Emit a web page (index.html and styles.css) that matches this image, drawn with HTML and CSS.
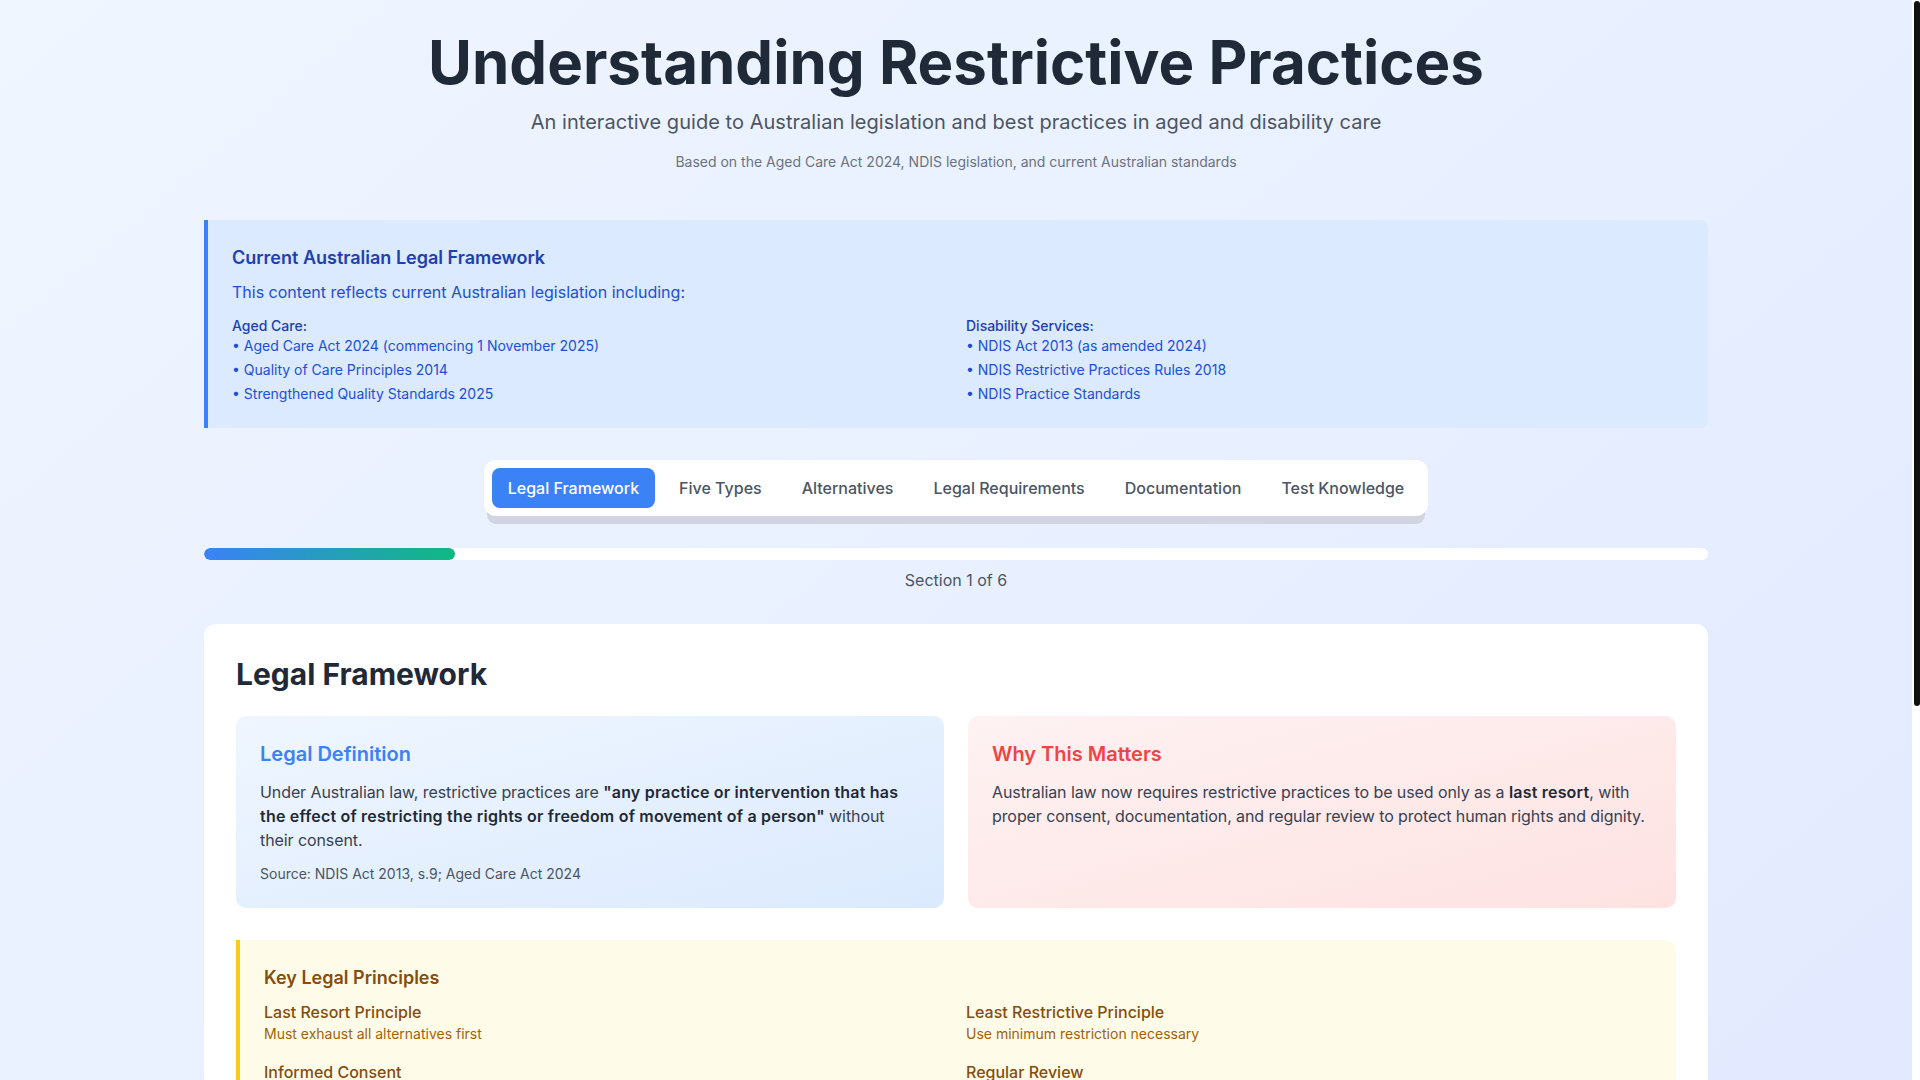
FILE: index.html
```html
<!DOCTYPE html>
<html lang="en">
<head>
<meta charset="utf-8">
<title>Understanding Restrictive Practices</title>
<link rel="stylesheet" href="styles.css">
</head>
<body>
<div class="scrollbar" aria-hidden="true"><div class="scrollbar-thumb"></div></div>
<div class="page">
  <header class="hero">
    <h1 class="hero-title">Understanding Restrictive Practices</h1>
    <p class="hero-sub">An interactive guide to Australian legislation and best practices in aged and disability care</p>
    <p class="hero-note">Based on the Aged Care Act 2024, NDIS legislation, and current Australian standards</p>
  </header>

  <section class="framework">
    <h3 class="framework-title">Current Australian Legal Framework</h3>
    <p class="framework-intro">This content reflects current Australian legislation including:</p>
    <div class="framework-grid">
      <div>
        <p class="framework-label">Aged Care:</p>
        <ul class="framework-list">
          <li>• Aged Care Act 2024 (commencing 1 November 2025)</li>
          <li>• Quality of Care Principles 2014</li>
          <li>• Strengthened Quality Standards 2025</li>
        </ul>
      </div>
      <div>
        <p class="framework-label">Disability Services:</p>
        <ul class="framework-list">
          <li>• NDIS Act 2013 (as amended 2024)</li>
          <li>• NDIS Restrictive Practices Rules 2018</li>
          <li>• NDIS Practice Standards</li>
        </ul>
      </div>
    </div>
  </section>

  <div class="tabs-wrap">
    <nav class="tabs">
      <button class="tab tab-active">Legal Framework</button>
      <button class="tab">Five Types</button>
      <button class="tab">Alternatives</button>
      <button class="tab">Legal Requirements</button>
      <button class="tab">Documentation</button>
      <button class="tab">Test Knowledge</button>
    </nav>
  </div>

  <div class="progress">
    <div class="progress-track"><div class="progress-fill" style="width: 16.6667%"></div></div>
    <p class="progress-label">Section 1 of 6</p>
  </div>

  <main class="card">
    <h2 class="card-title">Legal Framework</h2>
    <div class="two-col">
      <div class="panel panel-blue">
        <h3 class="panel-title title-blue">Legal Definition</h3>
        <p class="panel-text">Under Australian law, restrictive practices are <strong>"any practice or intervention that has the effect of restricting the rights or freedom of movement of a person"</strong> without their consent.</p>
        <p class="panel-source">Source: NDIS Act 2013, s.9; Aged Care Act 2024</p>
      </div>
      <div class="panel panel-red">
        <h3 class="panel-title title-red">Why This Matters</h3>
        <p class="panel-text">Australian law now requires restrictive practices to be used only as a <strong>last resort</strong>, with proper consent, documentation, and regular review to protect human rights and dignity.</p>
      </div>
    </div>

    <section class="principles">
      <h3 class="principles-title">Key Legal Principles</h3>
      <div class="principles-grid">
        <div>
          <p class="principle-name">Last Resort Principle</p>
          <p class="principle-desc">Must exhaust all alternatives first</p>
        </div>
        <div>
          <p class="principle-name">Least Restrictive Principle</p>
          <p class="principle-desc">Use minimum restriction necessary</p>
        </div>
        <div>
          <p class="principle-name">Informed Consent</p>
          <p class="principle-desc">Required from person or substitute decision-maker</p>
        </div>
        <div>
          <p class="principle-name">Regular Review</p>
          <p class="principle-desc">Ongoing monitoring and reduction strategies</p>
        </div>
      </div>
    </section>

    <section class="example">
      <h3 class="example-title">Practical Example</h3>
      <p class="example-text">A resident who repeatedly tries to leave the facility is placed in a locked unit. This is an environmental restraint and may only be used as a last resort, with informed consent, a behaviour support plan, and regular review by the care team.</p>
    </section>
  </main>

  <div class="pager">
    <button class="pager-btn pager-prev">Previous</button>
    <button class="pager-btn pager-next">Next</button>
  </div>

  <footer class="footer">
    <p>This guide is for educational purposes only and does not constitute legal advice.</p>
    <p>Always refer to current legislation and your organisation's policies.</p>
  </footer>
</div>
</body>
</html>
```

FILE: styles.css
```css
* { box-sizing: border-box; }

html { background: #ffffff; }

body {
  margin: 0;
  padding-right: 8px;
  font-family: Inter, "Noto Sans", "Liberation Sans", sans-serif;
  color: #1f2937;
  background: linear-gradient(to bottom right, #eff6ff, #e0e7ff);
  min-height: 100vh;
}

/* page scrollbar, drawn over the right edge */
.scrollbar {
  position: fixed;
  top: 0;
  right: 0;
  width: 8px;
  height: 100vh;
  background: #ffffff;
  z-index: 10;
}
.scrollbar-thumb {
  margin: 1px 0 0 2px;
  width: 6px;
  height: 705px;
  background: #111111;
  border-radius: 3px;
}

h1, h2, h3, p, ul { margin: 0; padding: 0; }
ul { list-style: none; }
button { font-family: inherit; }

.page {
  max-width: 1536px;
  margin: 0 auto;
  padding: 32px 16px;
}

/* Hero */
.hero { text-align: center; margin-bottom: 48px; }
.hero-title {
  font-size: 60px;
  line-height: 60px;
  font-weight: 700;
  color: #1f2937;
  margin-bottom: 16px;
}
.hero-sub {
  font-size: 20px;
  line-height: 28px;
  color: #4b5563;
  letter-spacing: 0.04px;
}
.hero-note {
  margin-top: 16px;
  font-size: 14px;
  line-height: 20px;
  color: #6b7280;
}

/* Framework box */
.framework {
  background: #dbeafe;
  border-left: 4px solid #3b82f6;
  border-radius: 0 8px 8px 0;
  padding: 24px;
  margin-bottom: 32px;
}
.framework-title {
  font-size: 18px;
  line-height: 28px;
  font-weight: 600;
  color: #1e40af;
  margin-bottom: 8px;
}
.framework-intro {
  font-size: 16px;
  line-height: 24px;
  color: #1d4ed8;
  margin-bottom: 12px;
}
.framework-grid {
  display: grid;
  grid-template-columns: 1fr 1fr;
  gap: 16px;
}
.framework-label {
  font-size: 14px;
  line-height: 20px;
  font-weight: 500;
  color: #1e40af;
}
.framework-list li {
  font-size: 14px;
  line-height: 20px;
  color: #1d4ed8;
  margin-top: 4px;
}
.framework-list li:first-child { margin-top: 0; }

/* Tabs */
.tabs-wrap {
  display: flex;
  justify-content: center;
  margin-bottom: 32px;
}
.tabs {
  display: flex;
  gap: 8px;
  background: #ffffff;
  border-radius: 12px;
  padding: 8px;
  box-shadow: 0 11px 0 -3px #d1d5e1;
}
.tab {
  border: 0;
  background: transparent;
  padding: 8px 16px;
  border-radius: 8px;
  font-size: 16px;
  line-height: 24px;
  font-weight: 500;
  color: #4b5563;
  cursor: pointer;
}
.tab-active {
  background: #3b82f6;
  color: #ffffff;
}

/* Progress */
.progress { margin-bottom: 32px; }
.progress-track {
  height: 12px;
  background: #ffffff;
  border-radius: 9999px;
  overflow: hidden;
}
.progress-fill {
  height: 100%;
  border-radius: 9999px;
  background: linear-gradient(to right, #3b82f6, #10b981);
}
.progress-label {
  margin-top: 8px;
  text-align: center;
  font-size: 16px;
  line-height: 24px;
  color: #4b5563;
}

/* Main card */
.card {
  display: block;
  background: #ffffff;
  border-radius: 12px;
  padding: 32px;
}
.card-title {
  font-size: 30px;
  line-height: 36px;
  font-weight: 700;
  color: #1f2937;
  margin-bottom: 24px;
}
.two-col {
  display: grid;
  grid-template-columns: 1fr 1fr;
  gap: 24px;
  margin-bottom: 32px;
}
.panel {
  border-radius: 10px;
  padding: 24px;
}
.panel-blue { background: linear-gradient(to bottom right, #eff6ff, #dbeafe); }
.panel-red { background: linear-gradient(to bottom right, #fef2f2, #fee2e2); }
.panel-title {
  font-size: 20px;
  line-height: 28px;
  font-weight: 600;
  margin-bottom: 12px;
}
.title-blue { color: #3b82f6; }
.title-red { color: #ef4444; }
.panel-text {
  font-size: 16px;
  line-height: 24px;
  color: #374151;
  letter-spacing: -0.09px;
}
.panel-text strong {
  font-weight: 600;
  color: #1f2937;
  letter-spacing: 0.2px;
}
.panel-source {
  margin-top: 12px;
  font-size: 14px;
  line-height: 20px;
  color: #4b5563;
}

/* Principles */
.principles {
  background: #fefce8;
  border-left: 4px solid #facc15;
  border-radius: 0 10px 10px 0;
  padding: 24px;
}
.principles-title {
  font-size: 18px;
  line-height: 28px;
  font-weight: 600;
  color: #854d0e;
  margin-bottom: 8px;
}
.principles-grid {
  display: grid;
  grid-template-columns: 1fr 1fr;
  gap: 16px;
}
.principle-name {
  font-size: 16px;
  line-height: 24px;
  font-weight: 500;
  color: #854d0e;
}
.principle-desc {
  font-size: 14px;
  line-height: 20px;
  color: #a16207;
}

/* Example */
.example {
  margin-top: 24px;
  background: #f0fdf4;
  border-radius: 10px;
  padding: 24px;
}
.example-title {
  font-size: 18px;
  line-height: 28px;
  font-weight: 600;
  color: #166534;
  margin-bottom: 8px;
}
.example-text {
  font-size: 16px;
  line-height: 24px;
  color: #374151;
}

/* Pager */
.pager {
  display: flex;
  justify-content: space-between;
  margin-top: 32px;
}
.pager-btn {
  border: 0;
  border-radius: 8px;
  padding: 12px 24px;
  font-size: 16px;
  line-height: 24px;
  font-weight: 500;
}
.pager-prev { background: #e5e7eb; color: #9ca3af; }
.pager-next { background: #3b82f6; color: #ffffff; }

/* Footer */
.footer {
  margin-top: 48px;
  padding: 24px 0 120px;
  text-align: center;
  font-size: 14px;
  line-height: 20px;
  color: #6b7280;
}
```
